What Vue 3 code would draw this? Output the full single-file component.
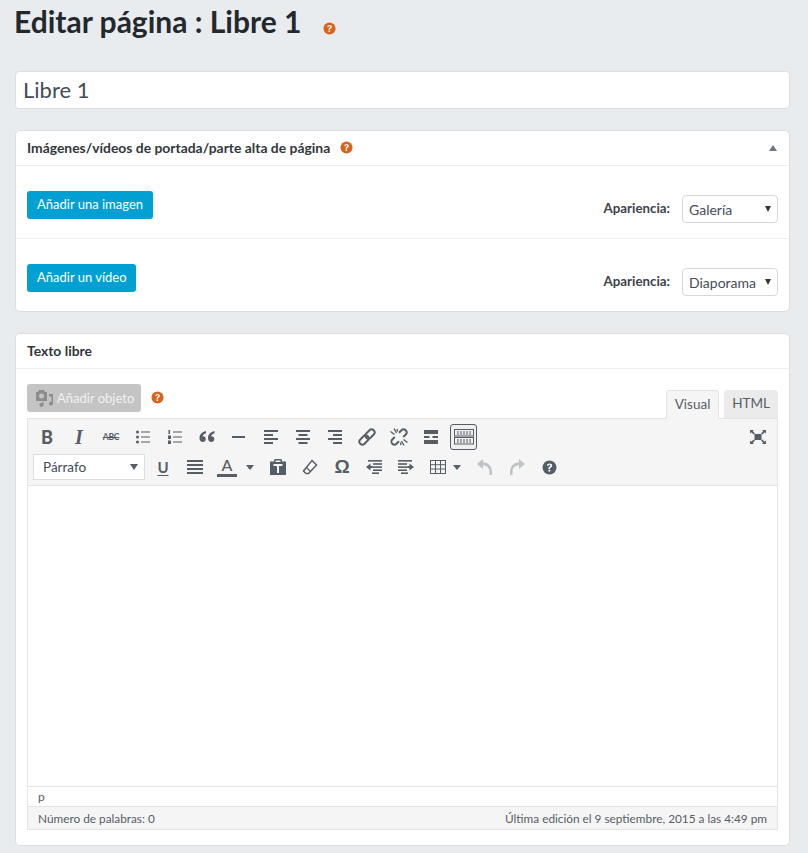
<script setup>
const c = '#555d66'
</script>

<template>
  <div class="page">
    <div class="title-row">
      <h1>Editar página : Libre 1</h1>
      <svg class="help h1-help" viewBox="0 0 14 14"><use href="#q" /></svg>
    </div>
    <svg width="0" height="0" class="defs">
      <symbol id="q" viewBox="0 0 14 14">
        <circle cx="7" cy="7" r="6.5" fill="currentColor" />
        <path d="M4.6 5.4C4.7 4 5.7 3.2 7.1 3.2c1.4 0 2.4.8 2.4 2 0 1-.6 1.5-1.2 1.9-.6.4-.8.6-.8 1.2H6c0-1.100.4-1.600 1-2 .5-.3.9-.6.9-1.100 0-.5-.4-.8-.9-.8-.6 0-.9.4-1 1z" fill="#fff" />
        <rect x="6" y="9.100" width="1.700" height="1.700" fill="#fff" />
      </symbol>
    </svg>

    <div class="title-input">Libre 1</div>

    <section class="card first">
      <header class="card-head">
        <span class="head-text">Imágenes/vídeos de portada/parte alta de página</span>
        <svg class="help head-help" viewBox="0 0 14 14"><use href="#q" /></svg>
        <span class="tri-up"></span>
      </header>
      <div class="media-row">
        <button class="blue">Añadir una imagen</button>
        <div class="look">
          <span class="look-label">Apariencia:</span>
          <div class="select"><span>Galería</span><i class="tri-down"></i></div>
        </div>
      </div>
      <div class="media-row">
        <button class="blue short">Añadir un vídeo</button>
        <div class="look">
          <span class="look-label">Apariencia:</span>
          <div class="select"><span>Diaporama</span><i class="tri-down"></i></div>
        </div>
      </div>
    </section>

    <section class="card second">
      <header class="card-head"><span class="head-text">Texto libre</span></header>
      <div class="editor-wrap">
        <div class="editor-top">
          <button class="grey">
            <svg width="20" height="18" viewBox="0 0 20 18" fill="#8c8c8c">
              <path d="M2 3h2l1-2h5l1 2h2v9H2z" />
              <circle cx="7.500" cy="7" r="2.500" fill="#c4c4c4" />
              <path d="M15 5h4v9.500a2 2 0 1 1-1.500-1.900V7.500H15z" />
              <path d="M6 14.500a2 2 0 1 0 3.500 1.300V13H8v1.200a2 2 0 0 0-2 .3z" />
            </svg>
            <span>Añadir objeto</span>
          </button>
          <svg class="help obj-help" viewBox="0 0 14 14"><use href="#q" /></svg>
          <div class="tabs">
            <span class="tab active">Visual</span>
            <span class="tab">HTML</span>
          </div>
        </div>

        <div class="editor">
          <div class="toolbar">
            <div class="tool-row">
              <span class="tb txt bold">B</span>
              <span class="tb txt ital">I</span>
              <span class="tb abc">ABC</span>
              <span class="tb"><svg width="16" height="16" viewBox="0 0 16 16" :fill="c"><circle cx="2.500" cy="3" r="1.500"/><circle cx="2.500" cy="8" r="1.500"/><circle cx="2.500" cy="13" r="1.500"/><rect x="6" y="2.500" width="9" height="1"/><rect x="6" y="7.500" width="9" height="1"/><rect x="6" y="12.500" width="9" height="1"/></svg></span>
              <span class="tb"><svg width="16" height="16" viewBox="0 0 16 16" :fill="c"><rect x="1.500" y="1" width="1.500" height="4"/><rect x="1" y="6.500" width="3" height="3.500"/><rect x="1" y="11.500" width="3" height="3.500"/><rect x="6" y="2.500" width="9" height="1"/><rect x="6" y="7.500" width="9" height="1"/><rect x="6" y="12.500" width="9" height="1"/></svg></span>
              <span class="tb"><svg width="16" height="14" viewBox="0 0 16 14" :fill="c"><path d="M7 1C3 2 .500 4.500.500 8c0 2.500 1.500 4 3.300 4 1.700 0 3-1.300 3-3 0-1.600-1.100-2.800-2.600-2.800-.3 0-.5 0-.7.100C3.900 4.800 5.200 3.700 7 3.200zM15.500 1c-4 1-6.500 3.500-6.500 7 0 2.500 1.500 4 3.300 4 1.700 0 3-1.300 3-3 0-1.600-1.100-2.800-2.600-2.800-.3 0-.5 0-.7.100.4-1.500 1.700-2.600 3.500-3.100z"/></svg></span>
              <span class="tb"><svg width="14" height="4" viewBox="0 0 14 4" :fill="c"><rect y="1" width="13" height="2"/></svg></span>
              <span class="tb"><svg width="15" height="14" viewBox="0 0 15 14" :fill="c"><rect y="0" width="14" height="2"/><rect y="4" width="9" height="2"/><rect y="8" width="14" height="2"/><rect y="12" width="9" height="2"/></svg></span>
              <span class="tb"><svg width="15" height="14" viewBox="0 0 15 14" :fill="c"><rect y="0" width="14" height="2"/><rect x="2.500" y="4" width="9" height="2"/><rect y="8" width="14" height="2"/><rect x="2.500" y="12" width="9" height="2"/></svg></span>
              <span class="tb"><svg width="15" height="14" viewBox="0 0 15 14" :fill="c"><rect y="0" width="14" height="2"/><rect x="5" y="4" width="9" height="2"/><rect y="8" width="14" height="2"/><rect x="5" y="12" width="9" height="2"/></svg></span>
              <span class="tb"><svg width="18" height="18" viewBox="0 0 18 18" fill="none" :stroke="c" stroke-width="1.900"><g transform="rotate(-45 9 9)"><rect x="-.5" y="6" width="10.500" height="6" rx="3"/><rect x="8" y="6" width="10.500" height="6" rx="3"/></g></svg></span>
              <span class="tb"><svg width="18" height="18" viewBox="0 0 18 18" fill="none" :stroke="c" stroke-width="1.900"><g transform="rotate(-45 9 9)"><path d="M6 6H2.500a3 3 0 0 0 0 6H6M12 6h3.500a3 3 0 0 1 0 6H12"/></g><path d="M6.500 5L4 .5M4.500 6.500L.5 3.500M7.500 3.500L7 1M11.500 13l2.500 4.500M13.500 11.500l4 3M10.500 14.500l.5 2.500" stroke-width="1.300"/></svg></span>
              <span class="tb"><svg width="14" height="14" viewBox="0 0 14 14" :fill="c"><rect width="14" height="4"/><rect y="6" width="5.500" height="2"/><rect x="8.500" y="6" width="5.500" height="2"/><rect y="10" width="14" height="4"/></svg></span>
              <span class="tb kitchen"><svg width="20" height="16" viewBox="0 0 20 16" fill="none" :stroke="c"><rect x=".500" y=".500" width="19" height="6.500"/><rect x=".500" y="8.500" width="19" height="6.500"/><path d="M3 3h14M3 5h14M3 11h14M3 13h14" stroke-dasharray="2 1" /></svg></span>
              <span class="spacer"></span>
              <span class="tb"><svg width="18" height="16" viewBox="0 0 18 16" :fill="c"><rect x="5.500" y="5" width="7" height="6"/><path d="M1 1h4L3.800 2.200 6 4.500 4.500 5.500 2.400 3.200 1 4.500zM17 1h-4l1.200 1.200L12 4.500l1.500 1 2.100-2.300L17 4.500zM1 15h4l-1.200-1.200L6 11.500l-1.500-1-2.100 2.300L1 11.500zM17 15h-4l1.200-1.200-2.200-2.300 1.500-1 2.100 2.300 1.400-1.300z"/></svg></span>
            </div>
            <div class="tool-row row2">
              <div class="fmt"><span>Párrafo</span><i class="tri-fmt"></i></div>
              <span class="tb txt under">U</span>
              <span class="tb"><svg width="16" height="14" viewBox="0 0 16 14" :fill="c"><rect width="16" height="2"/><rect y="4" width="16" height="2"/><rect y="8" width="16" height="2"/><rect y="12" width="16" height="2"/></svg></span>
              <span class="tb color"><span class="a">A</span><i class="bar"></i></span>
              <i class="tri-small color-tri"></i>
              <span class="tb paste"><svg width="16" height="16" viewBox="0 0 16 16" :fill="c"><path d="M0 2.500h4V1.500C4 .700 4.700 0 5.500 0h5c.8 0 1.500.7 1.500 1.500v1h4V16H0z"/><rect x="5.500" y="1.500" width="5" height="1.500" fill="#f5f5f5"/><path d="M3.500 5h9v2h-3.500v7H7V7H3.500z" fill="#f5f5f5"/></svg></span>
              <span class="tb"><svg width="16" height="16" viewBox="0 0 16 16" fill="#fff" :stroke="c" stroke-width="1.500"><path d="M10 1.500l4.500 4.500-8 8.500H4L1.500 12z"/><path d="M4.500 8.500l4 4" stroke-width="1.200"/></svg></span>
              <span class="tb omega">Ω</span>
              <span class="tb"><svg width="16" height="14" viewBox="0 0 16 14" :fill="c"><rect x="2" width="14" height="1.600"/><rect x="7" y="3.200" width="9" height="1.600"/><rect x="6" y="6.300" width="10" height="1.600"/><rect x="7" y="9.400" width="9" height="1.600"/><rect x="6" y="12.400" width="7" height="1.600"/><path d="M0 7l4.500-3.500V6H6v2H4.500v2.500z"/></svg></span>
              <span class="tb"><svg width="16" height="14" viewBox="0 0 16 14" :fill="c"><rect width="14" height="1.600"/><rect y="3.200" width="9" height="1.600"/><rect y="6.300" width="10" height="1.600"/><rect y="9.400" width="9" height="1.600"/><rect x="3" y="12.400" width="7" height="1.600"/><path d="M16 7l-4.500-3.500V6H10v2h1.500v2.500z"/></svg></span>
              <span class="tb tbl"><svg width="16" height="14" viewBox="0 0 16 14" fill="none" :stroke="c"><rect x=".500" y=".500" width="15" height="13"/><path d="M.500 4.700h15M.500 9h15M5.500.500v13M10.500.500v13"/></svg></span>
              <i class="tri-small tbl-tri"></i>
              <span class="tb undo"><svg width="18" height="18" viewBox="0 0 18 18" fill="#c0c3c6"><path d="M1 6l6-5v3.300c5 .2 9 3.600 9 9.700l-.1 3h-2.500l.1-3c0-3.900-2.400-6.400-6.500-6.700V11z"/></svg></span>
              <span class="tb"><svg width="18" height="18" viewBox="0 0 18 18" fill="#c0c3c6"><path d="M17 6l-6-5v3.300c-5 .2-9 3.600-9 9.700l.1 3h2.500l-.1-3c0-3.900 2.400-6.400 6.500-6.700V11z"/></svg></span>
              <span class="tb"><svg class="tool-help" width="15" height="15" viewBox="0 0 14 14"><use href="#q" /></svg></span>
            </div>
          </div>
          <div class="edit-area"></div>
          <div class="path">p</div>
          <div class="status">
            <span>Número de palabras: 0</span>
            <span>Última edición el 9 septiembre, 2015 a las 4:49 pm</span>
          </div>
        </div>
      </div>
    </section>
  </div>
</template>

<style>
html, body { margin: 0; background: #e9ecef; }
</style>

<style scoped>
.page {
  width: 808px;
  height: 853px;
  box-sizing: border-box;
  padding: 0 18px 0 15px;
  overflow: hidden;
  background: #e9ecef;
  font-family: Lato, "Liberation Sans", sans-serif;
  color: #32373c;
}
.defs { position: absolute; }
.title-row { display: flex; align-items: center; height: 44px; }
h1 {
  margin: -2px 0 0 -1px;
  font-size: 30px;
  font-weight: 700;
  color: #23282d;
  line-height: 44px;
}
.help { color: #d7651f; width: 13px; height: 13px; flex: none; }
.h1-help { margin: 12px 0 0 22px; }
.title-input {
  margin-top: 27px;
  height: 38px;
  box-sizing: border-box;
  background: #fff;
  border: 1px solid #dcdfe2;
  border-radius: 4px;
  padding: 0 7px;
  font-size: 22px;
  line-height: 36px;
  color: #444c5a;
}
.card {
  background: #fff;
  border: 1px solid #dcdfe2;
  border-radius: 5px;
  box-sizing: border-box;
}
.first { margin-top: 21px; height: 182px; }
.second { margin-top: 21px; height: 513px; }
.card-head {
  height: 35px;
  box-sizing: border-box;
  border-bottom: 1px solid #eceef0;
  padding: 0 11px;
  display: flex;
  align-items: center;
}
.head-text { font-size: 13.900px; font-weight: 700; color: #32373c; margin-top: -2px; }
.head-help { margin: -1px 0 0 10px; }
.tri-up {
  margin-left: auto;
  margin-right: 1px;
  width: 0; height: 0;
  border-left: 4.500px solid transparent;
  border-right: 4.500px solid transparent;
  border-bottom: 6px solid #6d757e;
}
.media-row {
  height: 73px;
  box-sizing: border-box;
  padding: 25px 11px 0;
  display: flex;
  align-items: flex-start;
  justify-content: space-between;
  border-bottom: 1px solid #eceef0;
}
.media-row:last-child { border-bottom: 0; }
button {
  font-family: inherit;
  border: 0;
  border-radius: 3px;
  height: 28px;
  padding: 0 10px 2px;
  font-size: 13px;
  color: #fff;
}
.blue { background: #00a0d2; }
.short { padding-right: 9px; }
.look { display: flex; align-items: center; margin-top: 4px; }
.look-label { font-size: 13.300px; font-weight: 700; color: #3d4349; margin: -2px 12px 0 0; }
.select {
  width: 96px;
  height: 28px;
  box-sizing: border-box;
  border: 1px solid #d5d8db;
  border-radius: 4px;
  padding-left: 6px;
  display: flex;
  align-items: center;
  font-size: 14px;
  color: #444c5a;
  position: relative;
}
.tri-down {
  position: absolute;
  right: 6px;
  top: 10px;
  width: 0; height: 0;
  border-left: 3.500px solid transparent;
  border-right: 3.500px solid transparent;
  border-top: 6px solid #32373c;
}
.editor-wrap { padding: 0 11px; }
.editor-top { display: flex; align-items: flex-start; height: 49px; position: relative; }
.grey {
  margin-top: 15px;
  width: 114px;
  background: #c4c4c4;
  display: flex;
  align-items: center;
  padding: 0 0 0 7px;
  gap: 3px;
  color: #f1f1f1;
}
.grey svg { flex: none; }
.obj-help { margin: 22px 0 0 10px; }
.tabs {
  margin-left: auto;
  margin-top: 21px;
  display: flex;
  gap: 5px;
  align-items: flex-end;
  height: 28px;
}
.tab {
  height: 28px;
  box-sizing: border-box;
  font-size: 13.500px;
  line-height: 27px;
  color: #555d66;
  background: #ebebeb;
  border-radius: 3px 3px 0 0;
  width: 54px;
  text-align: center;
}
.tab.active {
  background: #f5f5f5;
  border: 1px solid #e2e4e7;
  border-bottom: 0;
  height: 29px;
  margin-bottom: -1px;
  position: relative;
  z-index: 1;
  width: 53px;
}
.editor {
  border: 1px solid #e2e4e7;
  box-sizing: border-box;
  width: 751px;
}
.toolbar {
  background: #f5f5f5;
  height: 67px;
  box-sizing: border-box;
  border-bottom: 1px solid #e2e4e7;
  padding: 4px 3px 0;
}
.tool-row { display: flex; align-items: center; height: 28px; }
.row2 { margin-top: 1px; height: 30px; padding-left: 2px; }
.tb {
  width: 32px;
  height: 26px;
  flex: none;
  display: flex;
  align-items: center;
  justify-content: center;
  color: #555d66;
}
.tb svg { display: block; flex: none; }
.txt { font-family: "Liberation Serif", serif; }
.bold { font-family: Lato, sans-serif; font-weight: 900; font-size: 18px; }
.ital { font-family: "Liberation Serif", serif; font-style: italic; font-weight: 700; font-size: 20px; }
.abc { font-size: 8.500px; text-decoration: line-through; font-weight: 700; letter-spacing: -.2px; }
.kitchen {
  width: 27px;
  height: 26px;
  margin-left: 3px;
  box-sizing: border-box;
  border: 1px solid #555d66;
  border-radius: 3px;
  background: #f0f0f0;
}
.spacer { flex: 1; }
.fmt {
  width: 112px;
  height: 26px;
  box-sizing: border-box;
  border: 1px solid #dcdfe2;
  background: #fff;
  font-size: 13.500px;
  padding-left: 9px;
  display: flex;
  align-items: center;
  color: #444c5a;
  position: relative;
  flex: none;
  margin-right: 2px;
}
.tri-fmt {
  position: absolute;
  right: 6px;
  top: 9px;
  width: 0; height: 0;
  border-left: 4.500px solid transparent;
  border-right: 4.500px solid transparent;
  border-top: 6px solid #555d66;
}
.under {
  font-family: Lato, sans-serif;
  font-weight: 700;
  font-size: 15px;
  text-decoration: underline;
  text-underline-offset: 2px;
}
.color { position: relative; width: 32px; flex-direction: column; }
.a { font-size: 16px; font-weight: 500; line-height: 16px; }
.bar { display: block; width: 20px; height: 3px; background: #555d66; margin-top: 1px; }
.tri-small {
  flex: none;
  width: 0; height: 0;
  border-left: 4px solid transparent;
  border-right: 4px solid transparent;
  border-top: 5px solid #555d66;
}
.color-tri { margin-left: 3px; margin-right: 8px; }
.paste { width: 32px; }
.omega { font-size: 19px; font-family: "Liberation Sans", sans-serif; font-weight: 700; }
.tbl { width: 24px; margin-left: 4px; }
.tbl-tri { margin-left: 3px; margin-right: 8px; }
.tool-help { color: #555d66; }
.edit-area { height: 300px; background: #fff; }
.path {
  height: 21px;
  box-sizing: border-box;
  border-top: 1px solid #e2e4e7;
  border-bottom: 1px solid #e2e4e7;
  background: #fff;
  padding-left: 10px;
  font-size: 12px;
  line-height: 19px;
  color: #555d66;
}
.status {
  height: 22px;
  background: #f5f5f5;
  padding: 0 10px;
  display: flex;
  justify-content: space-between;
  align-items: center;
  font-size: 11.800px;
  color: #555d66;
}
</style>
